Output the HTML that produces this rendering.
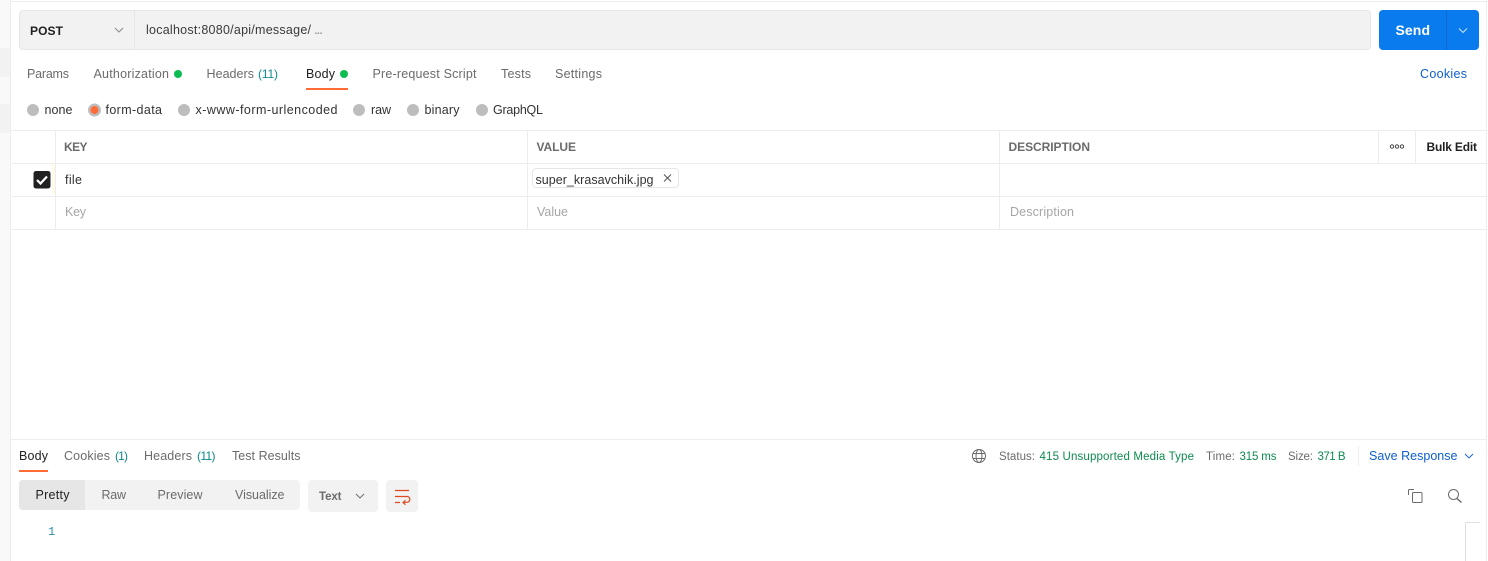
<!DOCTYPE html>
<html><head><meta charset="utf-8"><title>Postman</title>
<style>
html,body{margin:0;padding:0;background:#fff;width:1488px;height:561px;overflow:hidden}
svg{display:block}
text{font-family:"Liberation Sans",sans-serif;font-size:12.5px;fill:#6b6b6b}
.d{fill:#212121}.g{fill:#a6a6a6}.b{font-weight:bold}
.t{fill:#0f8a8a;font-size:12px}.gr{fill:#0d8a4f}.bl{fill:#0f5fd0}
.ln{stroke:#ededed;stroke-width:1;fill:none}
.ic{fill:none;stroke:#6b6b6b;stroke-width:1}
</style></head><body>
<svg width="1488" height="561" viewBox="0 0 1488 561" xmlns="http://www.w3.org/2000/svg">
<rect width="1488" height="561" fill="#fff"/>
<rect x="0" y="0" width="10" height="561" fill="#f9f9f9"/>
<rect x="0" y="48" width="10" height="29" fill="#f2f2f2"/>
<rect x="0" y="104" width="10" height="29" fill="#f2f2f2"/>
<path class="ln" d="M10.5 0V561M1486.5 0V561M11 1.5H1487"/>

<!-- URL bar -->
<rect x="19.5" y="10.5" width="1351" height="39" rx="3.5" fill="#f2f2f2" stroke="#e6e6e6"/>
<path d="M134.5 11V49" stroke="#e6e6e6"/>
<text x="30" y="35" class="d b" style="font-size:12px" textLength="33">POST</text>
<path d="M115 28l4 4 4-4" fill="none" stroke="#8a8a8a"/>
<text x="146" y="34" style="fill:#3a3a3a" textLength="165">localhost:8080/api/message/</text>
<text x="314" y="34" style="fill:#8a8a8a;font-size:14px" textLength="9">...</text>
<rect x="1379" y="10" width="100" height="40" rx="4" fill="#097bed"/>
<path d="M1446.5 10V50" stroke="#0a6bd0"/>
<text x="1395.5" y="35" class="b" style="fill:#fff;font-size:14px" textLength="34.5">Send</text>
<path d="M1459 28.500l4 4 4-4" fill="none" stroke="#d8e9fb" stroke-width=".9"/>

<!-- Request tabs -->
<text x="27" y="78" textLength="42">Params</text>
<text x="93.5" y="78" textLength="75.5">Authorization</text>
<circle cx="178" cy="74" r="4" fill="#0cbb52"/>
<text x="206.5" y="78" textLength="47.5">Headers</text>
<text x="258" y="78" class="t" textLength="20">(11)</text>
<text x="306" y="78" class="d" textLength="29">Body</text>
<circle cx="344" cy="74" r="4" fill="#0cbb52"/>
<rect x="306" y="88" width="42" height="2" fill="#ff6c37"/>
<text x="372.5" y="78" textLength="104">Pre-request Script</text>
<text x="501" y="78" textLength="30">Tests</text>
<text x="555" y="78" textLength="47">Settings</text>
<text x="1420" y="78" class="bl" style="font-size:12.5px" textLength="47">Cookies</text>

<!-- Body type radios -->
<g fill="#bdbdbd">
<circle cx="33" cy="110" r="6"/><circle cx="94.500" cy="110" r="6.500"/><circle cx="184" cy="110" r="6"/>
<circle cx="359" cy="110" r="6"/><circle cx="413" cy="110" r="6"/><circle cx="482" cy="110" r="6"/>
</g>
<circle cx="94.500" cy="110" r="4" fill="#ff6c37"/>
<text x="44.500" y="114" style="fill:#333" textLength="28">none</text>
<text x="105.500" y="114" style="fill:#333" textLength="56.500">form-data</text>
<text x="195.500" y="114" style="fill:#333" textLength="142">x-www-form-urlencoded</text>
<text x="371" y="114" style="fill:#333" textLength="20">raw</text>
<text x="424.500" y="114" style="fill:#333" textLength="35">binary</text>
<text x="493" y="114" style="fill:#333" textLength="50">GraphQL</text>

<!-- Table -->
<path class="ln" d="M11 130.500H1486M11 163.500H1486M11 196.500H1486M11 229.500H1486"/>
<path class="ln" d="M55.500 130V230M527.500 130V230M999.500 130V230M1378.500 130V163M1415.500 130V163"/>
<text x="64" y="151" class="b" style="font-size:12px" textLength="23.500">KEY</text>
<text x="536.500" y="151" class="b" style="font-size:12px" textLength="39.500">VALUE</text>
<text x="1008.500" y="151" class="b" style="font-size:12px" textLength="81.500">DESCRIPTION</text>
<g fill="none" stroke="#333" stroke-width=".9"><circle cx="1392" cy="146.500" r="1.700"/><circle cx="1397" cy="146.500" r="1.700"/><circle cx="1402" cy="146.500" r="1.700"/></g>
<text x="1426.500" y="151" class="d b" style="font-size:12px" textLength="50.500">Bulk Edit</text>
<rect x="52" y="164" width="3" height="30" fill="#fffbe9"/>
<rect x="33.500" y="171" width="17" height="17.500" rx="2.500" fill="#212121"/>
<path d="M37 180l3.500 3.500 6.500-7" fill="none" stroke="#fff" stroke-width="2.200"/>
<text x="65" y="184" style="fill:#333" textLength="17">file</text>
<rect x="532.500" y="168.500" width="146" height="19" rx="3.500" fill="#fff" stroke="#e6e6e6"/>
<text x="535.500" y="184" style="fill:#333" textLength="118">super_krasavchik.jpg</text>
<path d="M664 174.500l7 7M671 174.500l-7 7" fill="none" stroke="#555"/>
<text x="65" y="216" class="g" textLength="21">Key</text>
<text x="537" y="216" class="g" textLength="31">Value</text>
<text x="1010" y="216" class="g" textLength="64">Description</text>

<!-- Response -->
<path class="ln" d="M11 439.500H1486"/>
<text x="19" y="460" class="d" textLength="29">Body</text>
<rect x="19" y="470" width="29" height="2" fill="#ff6c37"/>
<text x="64" y="460" textLength="46">Cookies</text>
<text x="115" y="460" class="t" textLength="13">(1)</text>
<text x="144" y="460" textLength="48">Headers</text>
<text x="197" y="460" class="t" textLength="18.500">(11)</text>
<text x="232" y="460" textLength="68.500">Test Results</text>

<g class="ic"><circle cx="979" cy="456" r="6.500"/><ellipse cx="979" cy="456" rx="3" ry="6.500"/><path d="M973 453.500H985M973 458.500H985"/></g>
<text x="999" y="460" style="font-size:11.500px" textLength="36">Status:</text>
<text x="1039.500" y="460" class="gr" style="font-size:11.500px" textLength="154.500">415 Unsupported Media Type</text>
<text x="1206" y="460" style="font-size:11.500px" textLength="29">Time:</text>
<text x="1239.500" y="460" class="gr" style="font-size:11.500px" textLength="37">315 ms</text>
<text x="1288" y="460" style="font-size:11.500px" textLength="25">Size:</text>
<text x="1317.500" y="460" class="gr" style="font-size:11.500px" textLength="28">371 B</text>
<path class="ln" d="M1358.500 446V466"/>
<text x="1369" y="460" class="bl" style="font-size:12.500px" textLength="88.500">Save Response</text>
<path d="M1465 454l4 4 4-4" fill="none" stroke="#0f5fd0" stroke-width=".9"/>

<rect x="19" y="480" width="281" height="30" rx="4" fill="#f2f2f2"/>
<path d="M23 480H85V510H23a4 4 0 0 1-4-4V484a4 4 0 0 1 4-4z" fill="#e6e6e6"/>
<text x="35.500" y="499" class="d" textLength="34">Pretty</text>
<text x="101.500" y="499" textLength="24.500">Raw</text>
<text x="157.500" y="499" textLength="45">Preview</text>
<text x="235" y="499" textLength="49.500">Visualize</text>
<rect x="308" y="480" width="70" height="32" rx="4" fill="#f2f2f2"/>
<text x="319" y="500" class="b" style="font-size:11.500px" textLength="22.500">Text</text>
<path d="M356 494l4 4 4-4" fill="none" stroke="#6b6b6b" stroke-width=".9"/>
<rect x="386" y="480" width="32" height="32" rx="4" fill="#f2f2f2"/>
<path d="M395 490.500H409M395 496.500H407a2.800 2.800 0 0 1 0 5.800H403" fill="none" stroke="#e0491f" stroke-width="1.200"/>
<path d="M395 502.500H400M405.500 500.300l-2.500 2.200 2.500 2.200" fill="none" stroke="#e0491f" stroke-width="1.200"/>

<g class="ic">
<path d="M1408.500 495V490.500a1 1 0 0 1 1-1H1414"/>
<rect x="1412.500" y="492.500" width="9.500" height="10" rx="1"/>
<circle cx="1453.500" cy="494.500" r="5"/>
<path d="M1457 498.500L1461.500 502.500" stroke-width="1.500"/>
</g>
<text x="48" y="535" style="font-family:'Liberation Mono',monospace;font-size:12px;fill:#2f8fa8">1</text>
<path d="M1465.500 561V522.500H1480" fill="none" stroke="#e0e0e0"/>
</svg>
</body></html>
